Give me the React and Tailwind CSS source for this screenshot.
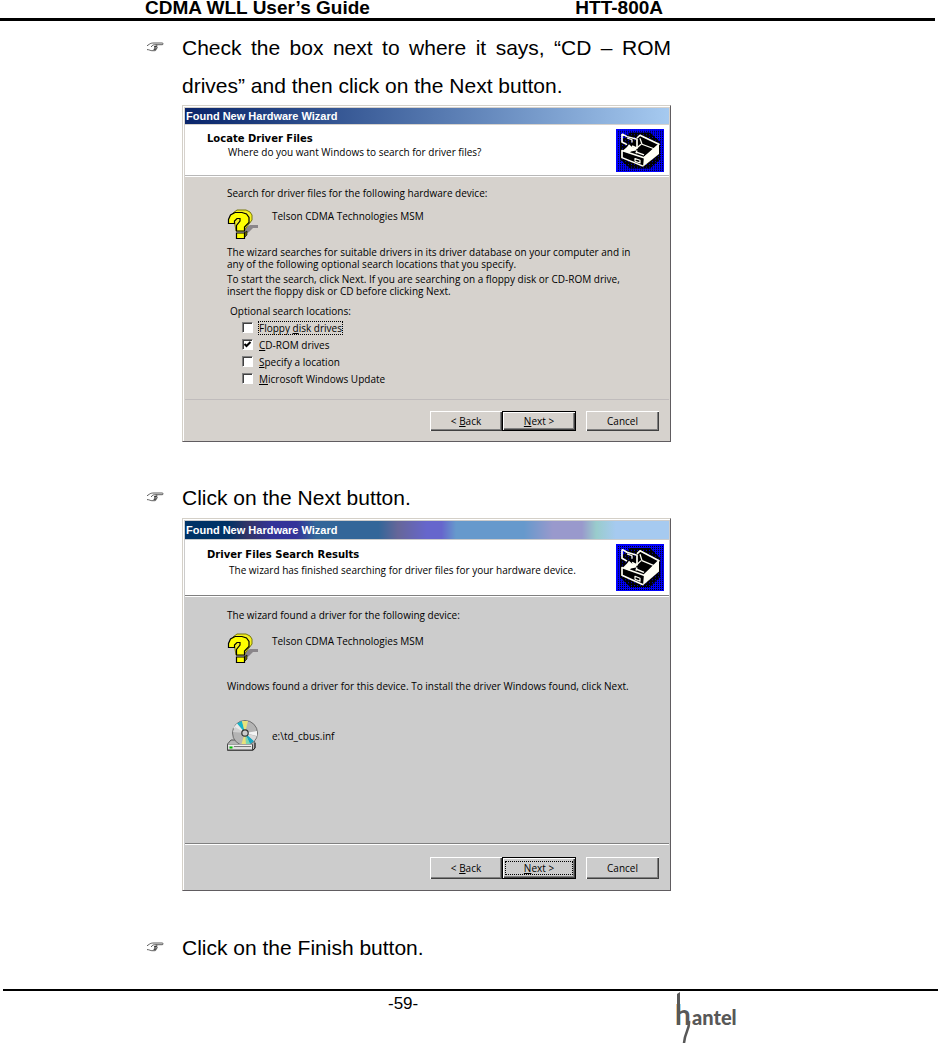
import { useState } from 'react';

const searchLocations = [
  { id: 'floppy', before: 'Floppy ', key: 'd', after: 'isk drives', focused: true },
  { id: 'cdrom', before: '', key: 'C', after: 'D-ROM drives' },
  { id: 'specify', before: '', key: 'S', after: 'pecify a location' },
  { id: 'update', before: '', key: 'M', after: 'icrosoft Windows Update' },
];

function HandIcon() {
  return (
    <svg viewBox="0 0 18 11" className="mt-[13px] h-[11px] w-[18px]" fill="none" stroke="#333" strokeWidth="0.8" aria-hidden="true">
      <path d="M1 3.8 3.4 2.2C4.5 1.3 6 1 8 1h8.2c1.2 0 1.2 1.7 0 1.7H9.5" />
      <path d="M6.2 3.6c1-.9 2.4-1 3.5-.7 1.6.3 1.8 1.3.8 1.5l-2 .1M8 4.5h2.6c1 .2 1 1.4 0 1.5H8M8 6h2.2c.8.2.8 1.3 0 1.4H7.6M7.8 7.4h1.5c.7.3.5 1.3-.2 1.3H5.8C4.3 8.7 3.5 7.6 1 7.6" />
      <path d="M6.2 3.6 5.2 5" />
    </svg>
  );
}

function ModemIcon({ className }) {
  return (
    <svg viewBox="0 0 48 48" preserveAspectRatio="none" className={className} aria-hidden="true">
      <defs>
        <pattern id="dots" width="2" height="2" patternUnits="userSpaceOnUse">
          <rect width="2" height="2" fill="#0000ff" />
          <rect width="1" height="1" fill="#000" />
        </pattern>
        <pattern id="night" width="3" height="3" patternUnits="userSpaceOnUse">
          <rect width="3" height="3" fill="#000" />
          <rect width="1" height="1" fill="#0000e0" />
        </pattern>
      </defs>
      <rect width="48" height="48" fill="#0000ff" />
      <rect x="1" y="1" width="46" height="46" fill="url(#dots)" />
      <path d="M14 4h20l10 10v20L34 44H14L4 34V14z" fill="url(#night)" />
      <path d="M6 24 24 8l19 9v11L27 42 6 32z" fill="#000" />
      <g fill="none" stroke="#fffff4" strokeWidth="1.7" strokeLinejoin="round">
        <path d="M21 10 24 7l19 10-15 15L6 24v8l21 9.5" />
        <path d="M6 5.5 11 8.5 21 11.5v10l-5-2.5M6 5.5v9l5 3" />
        <path d="M24 10.5 26 17l12 5M25 17l-4 4M11 10l5 2v3" strokeWidth="1.3" />
        <path d="m21 26 7 3M21 24l-1 3" strokeWidth="1.5" />
        <path d="M19 33v3l5 2v-3z" strokeWidth="1.2" />
      </g>
      <path d="M28 31 43 17v11L27 42z" fill="#fffff4" />
      <path d="m7 24 4-4 2-3 3 3 5 1-1 3-5 1-2 2z" fill="#fffff4" />
    </svg>
  );
}

function QuestionIcon() {
  return (
    <svg viewBox="0 0 32 31" className="h-[31px] w-8" aria-hidden="true">
      <path d="M19 18.5 23 16h8v3h-5l-4 4-5 3v-6z" fill="#8a868a" />
      <path d="M6 4 10 1h9l4 2 2 3v5l-3 4-3 4-2 3H9z" fill="#f4f020" stroke="#77770a" strokeWidth="1" />
      <path d="m17 29 3-3v-4l-3 2z" fill="#6b6b00" stroke="#000" strokeWidth="0.6" />
      <path
        d="M1.5 14.5v-4L3.5 6 8 3.5h7l4.5 1.5L22 8.5v5L17.5 18v4h-8v-5.5l3.5-4.5V9.5h-3L7.5 12v2.5z"
        fill="#ffff00"
        stroke="#000"
        strokeWidth="1.2"
      />
      <path d="M9.5 24h8v5.5h-8z" fill="#ffff00" stroke="#000" strokeWidth="1.2" />
    </svg>
  );
}

function DiscIcon() {
  return (
    <svg viewBox="0 0 32 31" className="h-[31px] w-8" aria-hidden="true">
      <path d="M.5 24 4 20h23l1 3v5l-2 2.5H.5z" fill="#b5b5b5" stroke="#555" />
      <circle cx="18" cy="13" r="12.5" fill="#b4b4b4" stroke="#6e6e6e" />
      <path d="M18 13 10 3.5 15 1z" fill="#16b4c8" />
      <path d="M18 13 15 1h6z" fill="#e8e27a" />
      <path d="M18 13 10 3.5 6 8z" fill="#e9e9e9" />
      <path d="M18 13 5.8 12 8 7z" fill="#d0d0d0" />
      <path d="m18 13 12-2v5z" fill="#f4f4f4" />
      <path d="m18 13 9 8-4 3z" fill="#14a8c4" />
      <path d="m18 13 5 11-4 1.3z" fill="#7ad8b0" />
      <path d="m18 13 1 12.3h-5z" fill="#e8e27a" />
      <path d="m18 13 11.8 3.5L27 21z" fill="#d9d9d9" />
      <circle cx="18" cy="13" r="3.2" fill="#ccc" stroke="#333" strokeWidth="1.2" />
      <path d="M.5 24.5h25V30H.5z" fill="#dedede" stroke="#444" />
      <path d="M1 25h24" stroke="#fff" />
      <path d="M2.5 27.5h3" stroke="#00c000" strokeWidth="2" />
      <path d="M7 26.5h17" stroke="#777" />
      <path d="m26 30 2-2v-5" fill="none" stroke="#222" />
    </svg>
  );
}

function WizardButton({ children, primary, focused }) {
  return (
    <button
      type="button"
      className={`flex flex-1 items-center justify-center p-[3px] leading-3 ${
        primary
          ? 'border border-black shadow-[inset_1px_1px_0_#fff,inset_-1px_-1px_0_#404040,inset_-2px_-2px_0_#808080]'
          : 'shadow-[inset_1px_1px_0_#fff,inset_-1px_-1px_0_#404040,inset_-2px_-2px_0_#808080]'
      }`}
    >
      <span className={`w-full ${focused ? 'outline-1 outline-dotted outline-black' : ''}`}>{children}</span>
    </button>
  );
}

function WizardFooter({ className, lineClass, focusNext }) {
  return (
    <footer className={`border-t ${lineClass}`}>
      <div className={`ml-auto mr-[10px] flex w-[229px] gap-[10px] ${className}`}>
        <div className="flex w-[146px]">
          <WizardButton>
            &lt; <u>B</u>ack
          </WizardButton>
          <WizardButton primary focused={focusNext}>
            <u>N</u>ext &gt;
          </WizardButton>
        </div>
        <WizardButton>Cancel</WizardButton>
      </div>
    </footer>
  );
}

function Wizard({ barClass, bgClass, children }) {
  return (
    <section
      className={`border border-t-[#d4d0c8] border-l-[#d4d0c8] border-r-[#605c60] border-b-[#605c60] font-['Open_Sans',Arial,sans-serif] text-[10px] leading-3 ${bgClass}`}
    >
      <div className="border-t border-l border-white p-px">
        <h2 className={`pl-px font-['Liberation_Sans',Arial,sans-serif] text-[11px] font-bold text-white ${barClass}`}>
          Found New Hardware Wizard
        </h2>
        {children}
      </div>
    </section>
  );
}

function Step({ children }) {
  return (
    <div className="grid grid-cols-[36px_1fr]">
      <HandIcon />
      <p className="text-justify">{children}</p>
    </div>
  );
}

export default function App() {
  const [checked, setChecked] = useState({ cdrom: true });

  return (
    <div className="min-h-screen bg-white font-['Liberation_Sans',Arial,sans-serif] text-black">
      {/* Running header */}
      <header className="mr-[3px] border-b-[3px] border-black pb-[2px]">
        <div className="ml-[145px] flex max-w-[518px] justify-between text-[19px] leading-4 font-bold">
          <span>CDMA WLL User’s Guide</span>
          <span>HTT-800A</span>
        </div>
      </header>

      <main className="ml-[146px] max-w-[525px] pt-2 text-[21px] leading-[38px]">
        <Step>Check the box next to where it says, “CD – ROM drives” and then click on the Next button.</Step>

        <div className="ml-9">
          <Wizard bgClass="bg-[#d6d2cd]" barClass="h-4 bg-linear-to-r from-[#0a246a] to-[#a6caf0] leading-4">
            <div className="mt-px flex justify-between border-b border-[#b8b8b8] bg-white pt-1 pr-[5px] pb-[3px] pl-[22px]">
              <div className="pt-1">
                <h3 className="font-['DejaVu_Sans',sans-serif] font-bold">Locate Driver Files</h3>
                <p className="mt-px pl-[21px]">Where do you want Windows to search for driver files?</p>
              </div>
              <ModemIcon className="h-[43px] w-12" />
            </div>

            <div className="border-t border-white pt-[10px] pl-[42px]">
              <p>Search for driver files for the following hardware device:</p>
              <div className="mt-[10px] flex gap-[13px]">
                <QuestionIcon />
                <p className="pt-px">Telson CDMA Technologies MSM</p>
              </div>
              <p className="mt-[6px]">
                The wizard searches for suitable drivers in its driver database on your computer and in
                <br />
                any of the following optional search locations that you specify.
              </p>
              <p className="mt-[3px]">
                To start the search, click Next. If you are searching on a floppy disk or CD-ROM drive,
                <br />
                insert the floppy disk or CD before clicking Next.
              </p>
              <fieldset className="mt-2 pb-3">
                <legend className="pl-[3px]">Optional search locations:</legend>
                <div className="mt-[2px] pl-[15px]">
                  {searchLocations.map((loc) => (
                    <label key={loc.id} className="flex h-[17px] w-fit items-center gap-[6px]">
                      <span className="relative flex">
                        <input
                          type="checkbox"
                          checked={!!checked[loc.id]}
                          onChange={(e) => setChecked({ ...checked, [loc.id]: e.target.checked })}
                          className="peer size-[11px] appearance-none border border-t-[#808080] border-l-[#808080] border-r-white border-b-white bg-white shadow-[inset_1px_1px_0_#404040]"
                        />
                        <svg viewBox="0 0 11 11" className="pointer-events-none absolute inset-0 hidden size-[11px] peer-checked:block" aria-hidden="true">
                          <path d="m2.5 5 2 2 4-4" fill="none" stroke="#000" strokeWidth="2" />
                        </svg>
                      </span>
                      <span className={loc.focused ? 'outline-1 outline-dotted outline-black' : ''}>
                        {loc.before}
                        <u>{loc.key}</u>
                        {loc.after}
                      </span>
                    </label>
                  ))}
                </div>
              </fieldset>
            </div>
            <WizardFooter className="mb-[9px] h-[31px] pt-[11px]" lineClass="border-[#c0bcbc]" />
          </Wizard>
        </div>

        <div className="mt-[37px]">
          <Step>Click on the Next button.</Step>
        </div>

        <div className="mt-px ml-9">
          <Wizard
            bgClass="bg-[#cccccc]"
            barClass="h-[18px] bg-[linear-gradient(90deg,#003366_0%,#003366_9%,#333366_13%,#333399_18%,#333399_23%,#336699_27%,#336699_40%,#666699_44%,#6666cc_50%,#6666cc_53%,#6699cc_56%,#6699cc_70%,#9999cc_76%,#9999cc_82%,#99cccc_85%,#a6caf0_89%,#a6caf0_100%)] leading-[18px]"
          >
            <div className="mt-px flex justify-between border-b border-[#808080] bg-white pt-1 pr-[5px] pb-1 pl-[22px]">
              <div className="pt-[5px]">
                <h3 className="font-['DejaVu_Sans',sans-serif] font-bold">Driver Files Search Results</h3>
                <p className="mt-[3px] pl-[22px]">The wizard has finished searching for driver files for your hardware device.</p>
              </div>
              <ModemIcon className="h-[47px] w-12" />
            </div>

            <div className="border-t border-white pt-3 pl-[42px]">
              <p>The wizard found a driver for the following device:</p>
              <div className="mt-3 flex gap-[13px]">
                <QuestionIcon />
                <p className="pt-[2px]">Telson CDMA Technologies MSM</p>
              </div>
              <p className="mt-4">Windows found a driver for this device. To install the driver Windows found, click Next.</p>
              <div className="mt-7 flex items-center gap-[13px] pb-[92px]">
                <DiscIcon />
                <p>e:\td_cbus.inf</p>
              </div>
            </div>
            <WizardFooter
              className="mb-[10px] h-[35px] pt-[13px]"
              lineClass="border-[#808080] shadow-[inset_0_1px_0_#fff]"
              focusNext
            />
          </Wizard>
        </div>

        <div className="mt-[38px]">
          <Step>Click on the Finish button.</Step>
        </div>
      </main>

      {/* Page number and brand */}
      <footer className="mt-[22px] ml-[3px] flex border-t-2 border-black">
        <span className="w-[672px] pt-px pl-[385px] text-[17px] leading-6">-59-</span>
        <svg viewBox="0 0 66 52" className="h-[52px] w-[66px]" role="img" aria-label="hantel" fill="#585858">
          <path d="M2 3 5 1v33H2z" />
          <path d="M14 30c1 8-4 10-5 22" fill="none" stroke="#585858" strokeWidth="2.5" />
          <text x="0" y="34" fontFamily="Lato, sans-serif" fontWeight="900" fontSize="20">
            <tspan fontSize="28" fontWeight="700">h</tspan>
            <tspan x="17">antel</tspan>
          </text>
        </svg>
      </footer>
    </div>
  );
}
